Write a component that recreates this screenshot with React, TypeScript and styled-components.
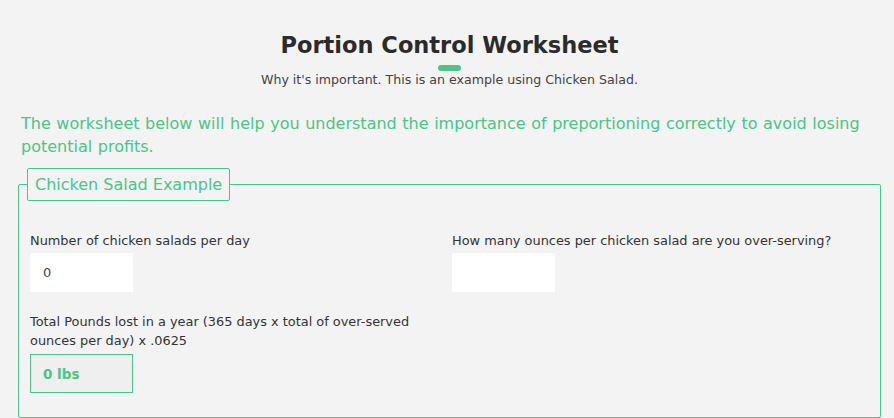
import React from "react";
import styled, { createGlobalStyle } from "styled-components";

const green = "#4cc488";

const Global = createGlobalStyle`
  html, body { margin: 0; padding: 0; background: #f3f3f3; }
  body { font-family: "DejaVu Sans", "Open Sans", sans-serif; color: #333; overflow: hidden; }
  * { box-sizing: border-box; }
`;

const Page = styled.div`
  padding: 30px 13px 0 18px;
  width: 894px;
  height: 418px;
  overflow: hidden;
`;

const Header = styled.header`
  display: flex;
  flex-direction: column;
  align-items: center;
`;

const Title = styled.h1`
  margin: 0;
  font-size: 22.5px;
  line-height: 30px;
  font-weight: 700;
  color: #2b2b2b;
`;

const Bar = styled.span`
  display: block;
  width: 23px;
  height: 6px;
  border-radius: 3px;
  background: ${green};
  margin: 5px 0 0 0;
`;

const Sub = styled.p`
  margin: 1px 0 0;
  font-size: 12.6px;
  line-height: 16px;
  color: #444;
`;

const Intro = styled.p`
  margin: 24px 0 0 3px;
  font-size: 16px;
  word-spacing: 0.5px;
  line-height: 23px;
  color: ${green};
`;

const Fieldset = styled.fieldset`
  margin: 10px 0 0;
  padding: 30px 11px 24px 11px;
  border: 1px solid ${green};
  border-radius: 2px;
  min-width: 0;
`;

const Legend = styled.legend`
  margin-left: -3px;
  padding: 6px 7px 5px;
  border: 1px solid ${green};
  border-radius: 2px;
  font-size: 16px;
  line-height: 20px;
  color: ${green};
`;

const Grid = styled.div`
  display: grid;
  grid-template-columns: 422px 1fr;
  row-gap: 20px;
`;

const Field = styled.div`
  display: flex;
  flex-direction: column;
  align-items: flex-start;
  padding-right: 20px;
`;

const Label = styled.label`
  font-size: 12.9px;
  line-height: 19px;
  color: #333;
  margin-bottom: 3px;
`;

const Input = styled.input`
  width: 103px;
  height: 39px;
  border: none;
  background: #fff;
  padding: 0 13px;
  font-family: inherit;
  font-size: 13px;
  color: #444;
  outline: none;
`;

const Result = styled.output`
  width: 103px;
  height: 39px;
  margin-top: 1px;
  border: 1px solid ${green};
  background: #efefef;
  padding: 0 12px;
  display: flex;
  align-items: center;
  font-size: 13.5px;
  font-weight: 700;
  color: ${green};
`;

export default function App() {
  return (
    <Page>
      <Global />
      <Header>
        <Title>Portion Control Worksheet</Title>
        <Bar />
        <Sub>Why it's important. This is an example using Chicken Salad.</Sub>
      </Header>
      <Intro>
        The worksheet below will help you understand the importance of preportioning correctly to avoid losing
        potential profits.
      </Intro>
      <Fieldset>
        <Legend>Chicken Salad Example</Legend>
        <Grid>
          <Field>
            <Label>Number of chicken salads per day</Label>
            <Input defaultValue="0" />
          </Field>
          <Field>
            <Label>How many ounces per chicken salad are you over-serving?</Label>
            <Input defaultValue="" />
          </Field>
          <Field>
            <Label>Total Pounds lost in a year (365 days x total of over-served ounces per day) x .0625</Label>
            <Result>0 lbs</Result>
          </Field>
        </Grid>
      </Fieldset>
    </Page>
  );
}
